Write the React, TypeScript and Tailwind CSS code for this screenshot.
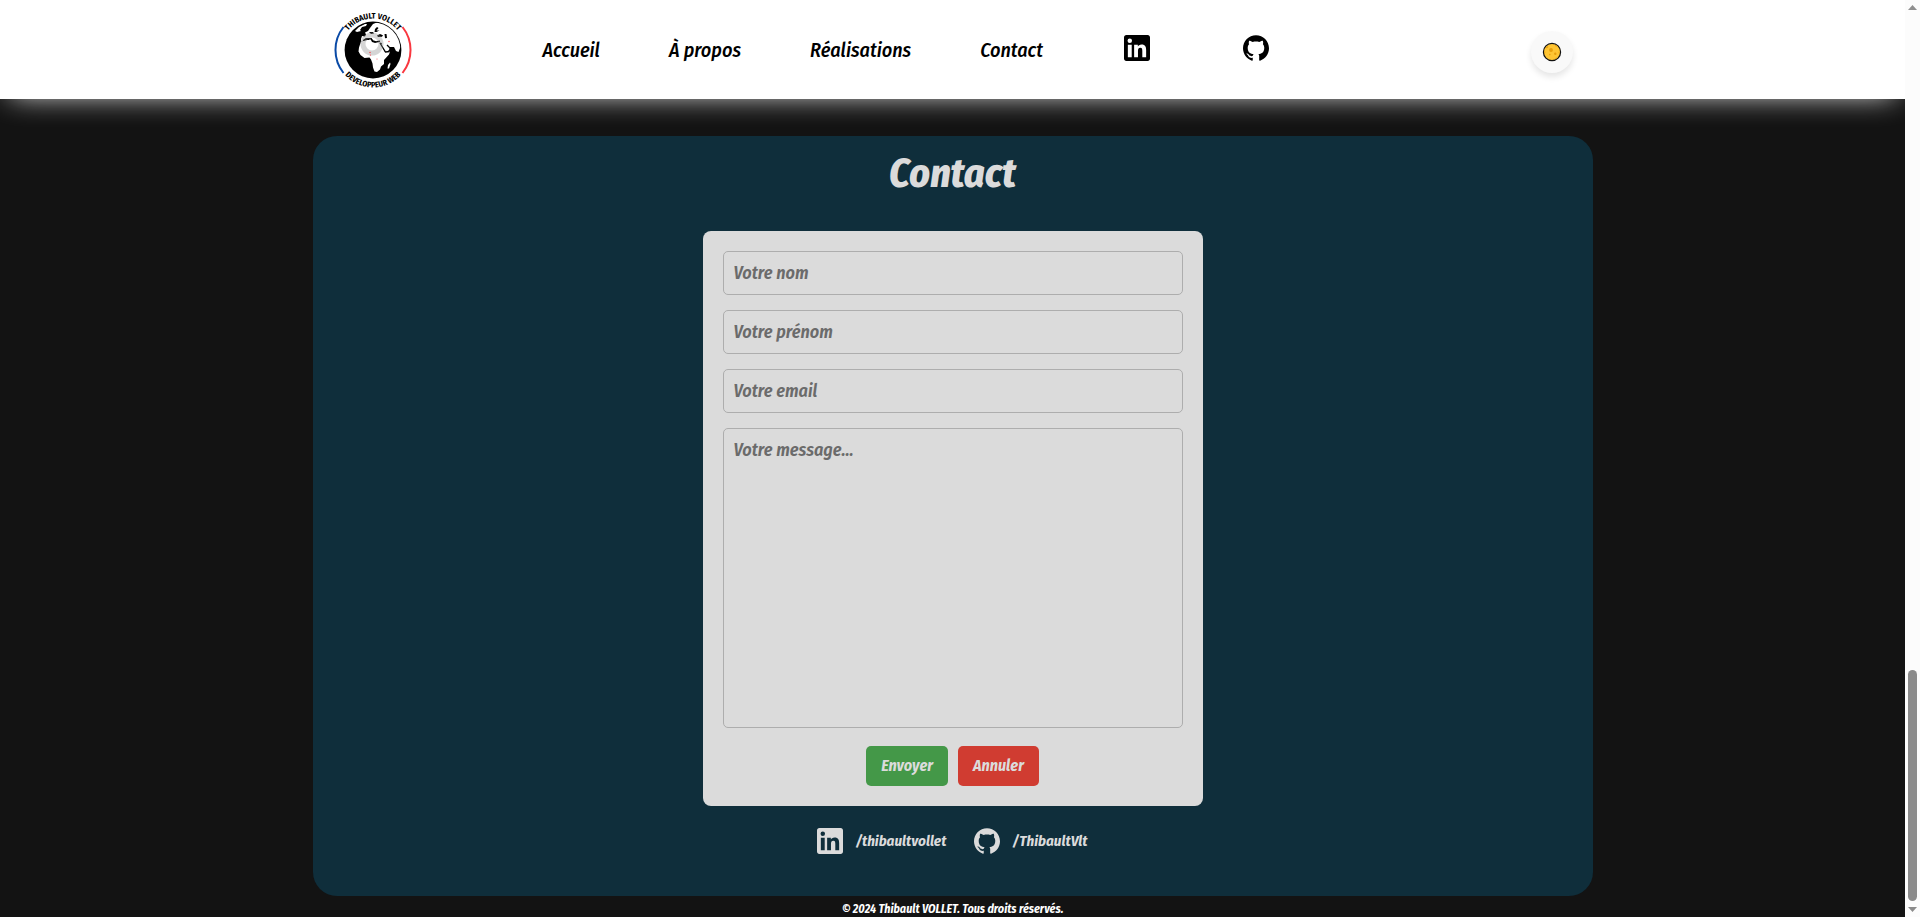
import React, { useState } from 'react';

const NAV_LINKS = [
  { label: 'Accueil', href: '#accueil' },
  { label: 'À propos', href: '#a-propos' },
  { label: 'Réalisations', href: '#realisations' },
  { label: 'Contact', href: '#contact' },
];

const FIELDS = [
  { name: 'nom', type: 'text', placeholder: 'Votre nom' },
  { name: 'prenom', type: 'text', placeholder: 'Votre prénom' },
  { name: 'email', type: 'email', placeholder: 'Votre email' },
];

const EMPTY_FORM: Record<string, string> = { nom: '', prenom: '', email: '', message: '' };

const fieldClass =
  'block w-full rounded-[5px] border border-[#adadad] px-[10px] py-2 text-lg leading-[26px] font-semibold text-[#222222] italic placeholder:text-[#6b6b6b] focus:border-[#0f2e3b] focus:outline-none';

function LinkedinIcon() {
  return (
    <svg viewBox="0 0 24 24" className="size-[26px]" fill="currentColor" aria-hidden="true">
      <path d="M20.447 20.452h-3.554v-5.569c0-1.328-.027-3.037-1.852-3.037-1.853 0-2.136 1.445-2.136 2.939v5.667H9.351V9h3.414v1.561h.046c.477-.9 1.637-1.85 3.37-1.85 3.601 0 4.267 2.37 4.267 5.455v6.286zM5.337 7.433a2.062 2.062 0 01-2.063-2.065 2.064 2.064 0 112.063 2.065zm1.782 13.019H3.555V9h3.564v11.452zM21.800 0H2.200C.900 0 0 .900 0 2.200v19.600C0 23.100.900 24 2.200 24h19.600C23.100 24 24 23.100 24 21.800V2.200C24 .900 23.100 0 21.800 0z" />
    </svg>
  );
}

function GithubIcon() {
  return (
    <svg viewBox="0 0 24 24" className="size-[26px]" fill="currentColor" aria-hidden="true">
      <path d="M12 .297c-6.63 0-12 5.373-12 12 0 5.303 3.438 9.8 8.205 11.385.6.113.82-.258.82-.577 0-.285-.01-1.04-.015-2.04-3.338.724-4.042-1.61-4.042-1.61C4.422 18.07 3.633 17.7 3.633 17.7c-1.087-.744.084-.729.084-.729 1.205.084 1.838 1.236 1.838 1.236 1.07 1.835 2.809 1.305 3.495.998.108-.776.417-1.305.76-1.605-2.665-.3-5.466-1.332-5.466-5.93 0-1.31.465-2.38 1.235-3.22-.135-.303-.54-1.523.105-3.176 0 0 1.005-.322 3.3 1.23.96-.267 1.98-.399 3-.405 1.02.006 2.04.138 3 .405 2.28-1.552 3.285-1.23 3.285-1.23.645 1.653.24 2.873.12 3.176.765.84 1.23 1.91 1.23 3.22 0 4.61-2.805 5.625-5.475 5.92.42.36.81 1.096.81 2.22 0 1.606-.015 2.896-.015 3.286 0 .315.21.69.825.57C20.565 22.092 24 17.592 24 12.297c0-6.627-5.373-12-12-12" />
    </svg>
  );
}

function Logo() {
  return (
    <svg viewBox="0 0 80 80" className="size-20" role="img" aria-label="Thibault Vollet, développeur web">
      <defs>
        <path id="logo-top" d="M8.500 40a31.500 31.500 0 0 1 63 0" />
        <path id="logo-bottom" d="M2.500 40a37.500 37.500 0 0 0 75 0" />
        <clipPath id="logo-globe">
          <circle cx="40" cy="40" r="27.500" />
        </clipPath>
      </defs>
      <circle cx="40" cy="40" r="28.400" fill="#000" />
      <g clipPath="url(#logo-globe)">
        {/* Greenland */}
        <path fill="#fff" d="M22 21l4-4 6-3 2 0-1 2-4 1-2 3 1 1-4 1z" />
        {/* Europe and Asia */}
        <path
          fill="#fff"
          d="M28 29l1-3 3 .5 1-2-1-2 3-1.500 2-3 3-4 5-2 4 1 4 0 5 4 5 6 4 8 .5 6-2 5-2.500-1-2-4-2 0-2 0-1 3-3 3-2-3-3-5 1-2-3-.5-3 .5-1-2-2-.5-1.500-2.500-1 .5 1 2-1.500 0-2-2.500-3 .5-2 2.500-2 .5z"
        />
        <path fill="#000" d="M42 19l2-2 1.500 1-2 2.500 3 0-3 1.500-2 0zM44 25.500l3-1.500 3 1.300-1 1.500-4 .2zM51.500 24l2 0 .5 4-2 .3zM36 22l4 0 1 1.500-3 .5z" />
        {/* Africa */}
        <path
          fill="#fff"
          d="M28 31.500l6-1.500 4 0 1 2 3.500 1 1.500-1 3 .5 2 4 3 5.500 5-.5-1 3-5 5.500 0 4-3 2.500-1 3-3 2.500-2.500-.5-1.500-4-.5-4-1.500-4-1.500-2-5 .5-4-3-2-3.500.5-4z"
        />
        <path fill="#fff" d="M55 55l2-2.500.5 1.500-1.500 4.500-1.500 0z" />
        {/* Mediterranean, Red Sea and Gulf */}
        <path
          fill="none"
          stroke="#000"
          strokeWidth="1.300"
          d="M30 30.500l4-1.800 4 .2 2 2.300 3 .8 4-.8M47 33l5.500 9 4-.5M54 35l3.500 3.500"
        />
      </g>
      <circle cx="39" cy="34" r="9" fill="none" stroke="#888" strokeOpacity=".35" strokeWidth="5" />
      <g fill="#f9373f">
        <circle cx="37" cy="42.500" r=".7" />
        <circle cx="37.500" cy="45" r=".6" />
        <circle cx="56" cy="31.500" r=".7" />
        <circle cx="44" cy="49" r=".5" />
      </g>
      <path d="M10.500 17a37 37 0 0 0 0 46" fill="none" stroke="#0a4aa6" strokeWidth="2" />
      <path d="M69.500 17a37 37 0 0 1 0 46" fill="none" stroke="#f9373f" strokeWidth="2" />
      <g className="text-[8px] font-bold" textAnchor="middle" fill="#000">
        <text>
          <textPath href="#logo-top" startOffset="50%">THIBAULT VOLLET</textPath>
        </text>
        <text>
          <textPath href="#logo-bottom" startOffset="50%">DEVELOPPEUR WEB</textPath>
        </text>
      </g>
    </svg>
  );
}

function MoonIcon() {
  return (
    <svg viewBox="0 0 20 20" className="size-5" aria-hidden="true">
      <circle cx="10" cy="10" r="8.600" fill="#ffc533" stroke="#111" strokeWidth="1.200" />
      <g fill="#e89f0c">
        <circle cx="9" cy="8" r="1.900" />
        <circle cx="13.300" cy="11.700" r="1.200" />
        <circle cx="7.800" cy="12.600" r=".8" />
        <path d="M4 5.500l2-1.500.3 1.300L4.600 6.500zM12.500 2.500l3 1.600-1.600.6zM2.200 9l1.300 1-.8 1.800zM17.800 9.500l-1.300.5.6 1.500zM12.500 17.300l1.500-1.800 1.200.4z" />
      </g>
    </svg>
  );
}

function Header() {
  return (
    <header className="relative z-10 bg-white shadow-[0_5px_30px_-10px_#ffffff]">
      <div className="mx-auto flex h-[99px] max-w-[1280px] items-center px-5">
        <a href="#accueil" className="shrink-0">
          <Logo />
        </a>
        <nav className="ml-[130px]">
          <ul className="flex items-center gap-[69px] text-xl leading-7 font-medium text-black italic">
            {NAV_LINKS.map((link) => (
              <li key={link.href}>
                <a href={link.href} className="whitespace-nowrap hover:underline">
                  {link.label}
                </a>
              </li>
            ))}
            <li className="px-3 pb-1">
              <a href="#linkedin" aria-label="LinkedIn">
                <LinkedinIcon />
              </a>
            </li>
            <li className="px-3 pb-1">
              <a href="#github" aria-label="GitHub">
                <GithubIcon />
              </a>
            </li>
          </ul>
        </nav>
        <button
          type="button"
          aria-label="Changer de thème"
          className="mt-1 ml-auto flex size-[42px] shrink-0 items-center justify-center rounded-full bg-[#f9f9f9] shadow-[0_4px_6px_rgba(0,0,0,0.1)]"
        >
          <MoonIcon />
        </button>
      </div>
    </header>
  );
}

function ContactForm() {
  const [form, setForm] = useState(EMPTY_FORM);

  const handleChange = (e: React.ChangeEvent<HTMLInputElement | HTMLTextAreaElement>) => {
    setForm({ ...form, [e.target.name]: e.target.value });
  };

  const handleSubmit = (e: React.FormEvent) => {
    e.preventDefault();
    setForm(EMPTY_FORM);
  };

  return (
    <form onSubmit={handleSubmit} className="mx-auto w-full max-w-[500px] rounded-lg bg-[#dbdbdb] p-5">
      <div className="flex flex-col gap-[15px]">
        {FIELDS.map((field) => (
          <input
            key={field.name}
            type={field.type}
            name={field.name}
            aria-label={field.placeholder}
            placeholder={field.placeholder}
            value={form[field.name]}
            onChange={handleChange}
            className={fieldClass}
          />
        ))}
        <textarea
          name="message"
          aria-label="Votre message"
          placeholder="Votre message..."
          value={form.message}
          onChange={handleChange}
          className={`${fieldClass} h-[300px] resize-none`}
        />
      </div>
      <div className="mt-[18px] flex justify-center gap-[10px] text-base leading-6 font-bold text-[#dbdbdb] italic">
        <button type="submit" className="rounded-[5px] bg-[#449848] px-[15px] py-2 hover:bg-[#3b853f]">
          Envoyer
        </button>
        <button
          type="button"
          onClick={() => setForm(EMPTY_FORM)}
          className="rounded-[5px] bg-[#d03c31] px-[15px] py-2 hover:bg-[#b93329]"
        >
          Annuler
        </button>
      </div>
    </form>
  );
}

function Scrollbar() {
  return (
    <div className="flex w-[15px] shrink-0 flex-col items-center justify-between bg-[#fcfcfc] py-[5px]" aria-hidden="true">
      <svg viewBox="0 0 9 5" className="h-[5px] w-[9px]" fill="#8b8b8b">
        <path d="M0 5L4.500 0 9 5z" />
      </svg>
      <div className="flex flex-col items-center gap-1.5">
        <div className="h-[231px] w-[9px] rounded-full bg-[#8b8b8b]" />
        <svg viewBox="0 0 9 5" className="h-[5px] w-[9px]" fill="#8b8b8b">
          <path d="M0 0L4.500 5 9 0z" />
        </svg>
      </div>
    </div>
  );
}

export default function App() {
  return (
    <div className="flex min-h-screen bg-[#131313] font-['Fira_Sans_Condensed','Roboto_Condensed','Open_Sans',sans-serif]">
      <div className="min-w-0 flex-1">
        <Header />
        <main className="mt-[37px]">
          <section id="contact" className="mx-auto max-w-[1280px] rounded-3xl bg-[#0f2e3b] pt-2 pb-[42px] text-[#dbdbdb]">
            <h1 className="mb-[27px] text-center text-[40px] leading-[60px] font-extrabold italic">Contact</h1>
            <ContactForm />
            <div className="mt-[22px] flex justify-center gap-7 text-[15px] leading-[26px] font-bold italic">
              <a href="#linkedin" className="flex items-center gap-3 hover:underline">
                <LinkedinIcon />
                /thibaultvollet
              </a>
              <a href="#github" className="flex items-center gap-3 hover:underline">
                <GithubIcon />
                /ThibaultVlt
              </a>
            </div>
          </section>
        </main>
        <footer className="pt-[5px] text-center text-xs leading-4 font-bold text-white italic">
          © 2024 Thibault VOLLET. Tous droits réservés.
        </footer>
      </div>
      <Scrollbar />
    </div>
  );
}
